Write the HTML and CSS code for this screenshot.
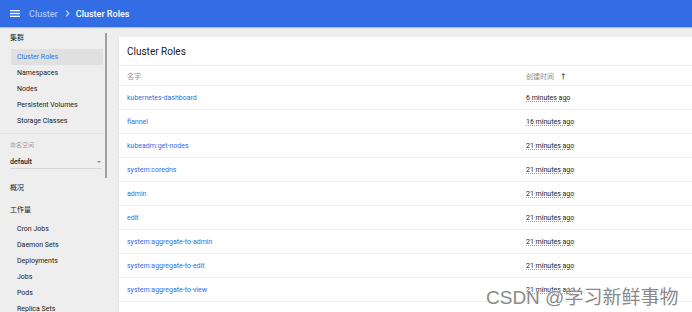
FILE: index.html
```html
<!DOCTYPE html>
<html lang="zh">
<head>
  <meta charset="UTF-8">
  <meta name="viewport" content="width=device-width, initial-scale=1.0">
  <title>Cluster Roles</title>
  <link rel="stylesheet" href="styles.css">
</head>
<body>

  <header class="toolbar">
    <svg class="menu-icon" width="10" height="7" viewBox="0 0 10 7">
      <rect x="0" y="0" width="10" height="1.3" fill="#fff"/>
      <rect x="0" y="2.85" width="10" height="1.3" fill="#fff"/>
      <rect x="0" y="5.7" width="10" height="1.3" fill="#fff"/>
    </svg>
    <span class="crumb">Cluster</span>
    <svg class="crumb-sep" width="5" height="7" viewBox="0 0 5 7">
      <path d="M1 0.7 L3.8 3.5 L1 6.3" fill="none" stroke="#c9d8f8" stroke-width="1.2"/>
    </svg>
    <span class="crumb-current">Cluster Roles</span>
  </header>

  <div class="layout">
    <nav class="sidebar">
      <div class="nav-title">集群</div>
      <a class="nav-item active">Cluster Roles</a>
      <a class="nav-item">Namespaces</a>
      <a class="nav-item">Nodes</a>
      <a class="nav-item">Persistent Volumes</a>
      <a class="nav-item">Storage Classes</a>

      <div class="ns-block">
        <div class="ns-label">命名空间</div>
        <div class="ns-select">
          <span>default</span>
          <span class="ns-arrow"></span>
        </div>
      </div>

      <div class="nav-section first">概况</div>
      <div class="nav-section">工作量</div>
      <a class="nav-item">Cron Jobs</a>
      <a class="nav-item">Daemon Sets</a>
      <a class="nav-item">Deployments</a>
      <a class="nav-item">Jobs</a>
      <a class="nav-item">Pods</a>
      <a class="nav-item">Replica Sets</a>

      <!-- overlay scrollbar -->
      <div class="scroll-thumb"></div>
    </nav>

    <main class="content">
      <section class="card">
        <h1 class="card-title">Cluster Roles</h1>
        <div class="row head">
          <div class="col-name">名字</div>
          <div class="col-age">创建时间 <span class="sort">&#8593;</span></div>
        </div>
        <div class="row"><a class="col-name">kubernetes-dashboard</a><div class="col-age"><span class="age">6 minutes ago</span></div></div>
        <div class="row"><a class="col-name">flannel</a><div class="col-age"><span class="age">16 minutes ago</span></div></div>
        <div class="row"><a class="col-name">kubeadm:get-nodes</a><div class="col-age"><span class="age">21 minutes ago</span></div></div>
        <div class="row"><a class="col-name">system:coredns</a><div class="col-age"><span class="age">21 minutes ago</span></div></div>
        <div class="row"><a class="col-name">admin</a><div class="col-age"><span class="age">21 minutes ago</span></div></div>
        <div class="row"><a class="col-name">edit</a><div class="col-age"><span class="age">21 minutes ago</span></div></div>
        <div class="row"><a class="col-name">system:aggregate-to-admin</a><div class="col-age"><span class="age">21 minutes ago</span></div></div>
        <div class="row"><a class="col-name">system:aggregate-to-edit</a><div class="col-age"><span class="age">21 minutes ago</span></div></div>
        <div class="row"><a class="col-name">system:aggregate-to-view</a><div class="col-age"><span class="age">21 minutes ago</span></div></div>
      </section>
    </main>
  </div>

  <div class="watermark">CSDN @学习新鲜事物</div>

</body>
</html>
```

FILE: styles.css
```css
html, body {
  margin: 0;
  height: 100%;
  overflow: hidden;
}

body {
  font-family: Roboto, "Noto Sans CJK SC", sans-serif;
  background-color: #eeeeee;
  color: #212121;
}

.toolbar {
  display: flex;
  align-items: center;
  height: 27px;
  padding-left: 10px;
  background-color: #326de6;
  box-shadow: 0 1px 1px rgba(0, 0, 0, 0.2);
  position: relative;
  z-index: 1;
}

.menu-icon {
  margin-right: 9px;
}

.crumb {
  color: #a9c2f4;
  font-size: 9px;
  font-weight: 500;
}

.crumb-sep {
  margin: 0 6px 0 7px;
}

.crumb-current {
  color: #fff;
  font-size: 9px;
  font-weight: 500;
}

.layout {
  display: flex;
  height: calc(100% - 27px);
  overflow: hidden;
}

.sidebar {
  position: relative;
  width: 107px;
  flex-shrink: 0;
  padding-top: 6px;
  font-size: 7px;
}

.scroll-thumb {
  position: absolute;
  top: 6px;
  right: 0;
  width: 2px;
  height: 145px;
  background-color: #a0a0a0;
}

.nav-title {
  padding-left: 10px;
  height: 16px;
  line-height: 10px;
  font-size: 7px;
  color: #212121;
}

.nav-item {
  display: block;
  margin: 0 4px 0 11px;
  padding-left: 6px;
  height: 16px;
  line-height: 17px;
  color: #212121;
}

.nav-item.active {
  background-color: #e0e0e0;
  color: #326de6;
}

.ns-block {
  margin: 4px 4px 0 0;
  padding: 7px 1px 0 10px;
  border-top: 1px solid #e2e2e2;
}

.ns-label {
  font-size: 6px;
  color: #9e9e9e;
  height: 8px;
  line-height: 8px;
}

.ns-select {
  display: flex;
  justify-content: space-between;
  align-items: center;
  margin-top: 6px;
  height: 13px;
  font-weight: 500;
  border-bottom: 1px solid #d6d6d6;
}

.ns-arrow {
  width: 0;
  height: 0;
  margin-right: 1px;
  border-left: 2.5px solid transparent;
  border-right: 2.5px solid transparent;
  border-top: 2.5px solid #8a8a8a;
}

.nav-section {
  padding-left: 10px;
  height: 22px;
  line-height: 22px;
  font-size: 7px;
}

.nav-section.first {
  margin-top: 8px;
}

.content {
  flex: 1;
  display: flex;
  padding: 10px 0 0 12px;
}

.card {
  width: 600px;
  background-color: #fff;
  box-shadow: 0 1px 2px rgba(0, 0, 0, 0.12);
}

.card-title {
  margin: 0;
  padding: 1px 8px 0;
  height: 27px;
  line-height: 27px;
  font-size: 10px;
  font-weight: 400;
  border-bottom: 1px solid #eeeeee;
}

.row {
  display: flex;
  align-items: center;
  height: 22px;
  padding: 1px 8px 0;
  font-size: 7px;
  border-bottom: 1px solid #eeeeee;
}

.row.head {
  height: 18px;
  color: #8e8e8e;
}

.col-name {
  width: 399px;
  color: #326de6;
}

.head .col-name {
  color: #8e8e8e;
}

.col-age {
  color: #212121;
}

.head .col-age {
  color: #8e8e8e;
}

.sort {
  margin-left: 4px;
  color: #444;
  font-weight: 700;
}

.age {
  text-decoration: underline dotted #9a9a9a;
  text-underline-offset: 1px;
}

.watermark {
  position: absolute;
  left: 486px;
  top: 282px;
  font-size: 19px;
  color: #8a8a8a;
  text-shadow: 0 0 2px #fff, 0 0 2px #fff;
  font-family: "Liberation Sans", "Noto Sans CJK SC", sans-serif;
}
```
